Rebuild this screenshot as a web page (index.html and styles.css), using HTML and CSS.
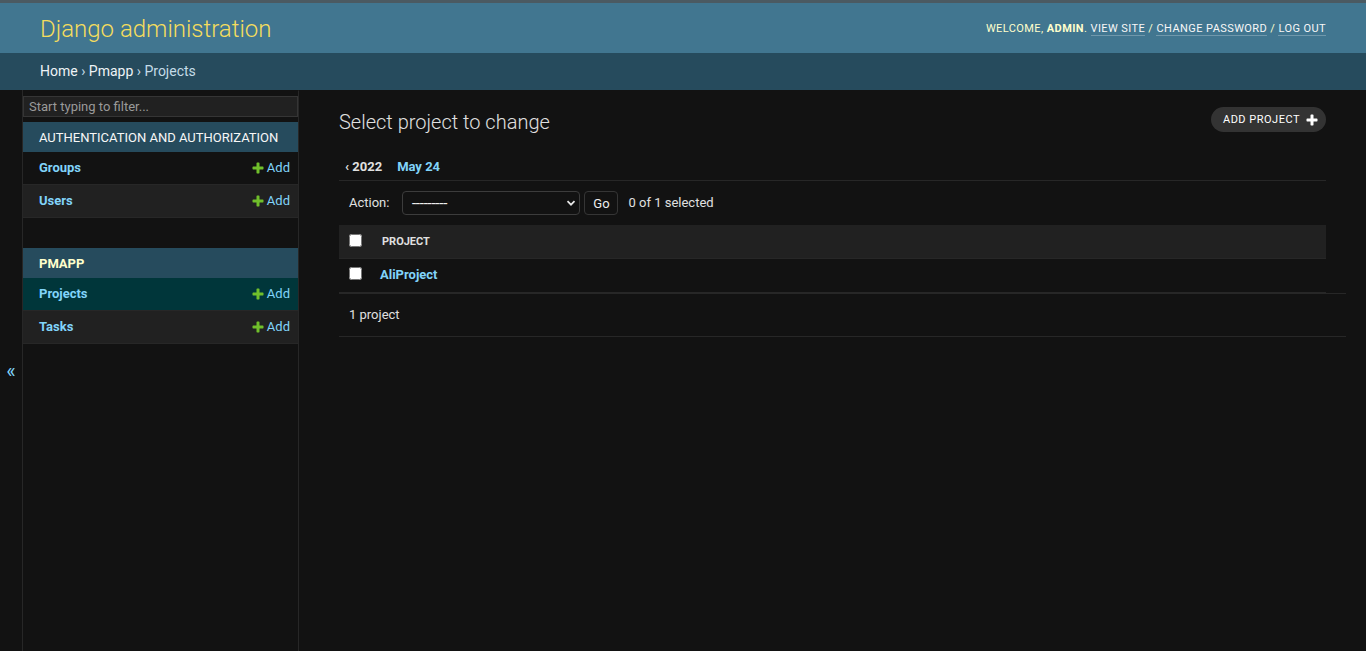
FILE: index.html
```html
<!DOCTYPE html>
<html lang="en">
<head>
<meta charset="utf-8">
<title>Select project to change | Django site admin</title>
<link rel="stylesheet" href="styles.css">
</head>
<body>
<div class="topband"></div>
<header class="header">
  <h1 class="site-name"><a href="#">Django administration</a></h1>
  <div class="user-tools">Welcome, <strong>admin</strong>. <a href="#">View site</a> / <a href="#">Change password</a> / <a href="#">Log out</a></div>
</header>
<nav class="breadcrumbs"><a href="#">Home</a>&nbsp;›&nbsp;<a href="#">Pmapp</a>&nbsp;›&nbsp;Projects</nav>
<div class="main">
  <button class="toggle-nav" type="button">«</button>
  <nav class="sidebar">
    <input class="nav-filter" type="search" placeholder="Start typing to filter...">
    <div class="app">
      <div class="app-caption"><a href="#">Authentication and Authorization</a></div>
      <div class="model-row odd">
        <a class="model-link" href="#">Groups</a>
        <a class="addlink" href="#"><svg class="plus" viewBox="0 0 1792 1792"><path fill="#70bf2b" d="M1600 796v192q0 40-28 68t-68 28h-416v416q0 40-28 68t-68 28h-192q-40 0-68-28t-28-68v-416h-416q-40 0-68-28t-28-68v-192q0-40 28-68t68-28h416v-416q0-40 28-68t68-28h192q40 0 68 28t28 68v416h416q40 0 68 28t28 68z"/></svg>Add</a>
      </div>
      <div class="model-row even">
        <a class="model-link" href="#">Users</a>
        <a class="addlink" href="#"><svg class="plus" viewBox="0 0 1792 1792"><path fill="#70bf2b" d="M1600 796v192q0 40-28 68t-68 28h-416v416q0 40-28 68t-68 28h-192q-40 0-68-28t-28-68v-416h-416q-40 0-68-28t-28-68v-192q0-40 28-68t68-28h416v-416q0-40 28-68t68-28h192q40 0 68 28t28 68v416h416q40 0 68 28t28 68z"/></svg>Add</a>
      </div>
    </div>
    <div class="app current-app">
      <div class="app-caption"><a href="#">Pmapp</a></div>
      <div class="model-row current-model">
        <a class="model-link" href="#">Projects</a>
        <a class="addlink" href="#"><svg class="plus" viewBox="0 0 1792 1792"><path fill="#70bf2b" d="M1600 796v192q0 40-28 68t-68 28h-416v416q0 40-28 68t-68 28h-192q-40 0-68-28t-28-68v-416h-416q-40 0-68-28t-28-68v-192q0-40 28-68t68-28h416v-416q0-40 28-68t68-28h192q40 0 68 28t28 68v416h416q40 0 68 28t28 68z"/></svg>Add</a>
      </div>
      <div class="model-row even">
        <a class="model-link" href="#">Tasks</a>
        <a class="addlink" href="#"><svg class="plus" viewBox="0 0 1792 1792"><path fill="#70bf2b" d="M1600 796v192q0 40-28 68t-68 28h-416v416q0 40-28 68t-68 28h-192q-40 0-68-28t-28-68v-416h-416q-40 0-68-28t-28-68v-192q0-40 28-68t68-28h416v-416q0-40 28-68t68-28h192q40 0 68 28t28 68v416h416q40 0 68 28t28 68z"/></svg>Add</a>
      </div>
    </div>
  </nav>
  <main class="content">
    <div class="title-row">
      <h1 class="page-title">Select project to change</h1>
      <a class="object-tool" href="#">Add project<svg class="tool-plus" viewBox="0 0 1792 1792"><path fill="#ffffff" d="M1600 796v192q0 40-28 68t-68 28h-416v416q0 40-28 68t-68 28h-192q-40 0-68-28t-28-68v-416h-416q-40 0-68-28t-28-68v-192q0-40 28-68t68-28h416v-416q0-40 28-68t68-28h192q40 0 68 28t28 68v416h416q40 0 68 28t28 68z"/></svg></a>
    </div>
    <ul class="toplinks">
      <li class="date-back"><a href="#">‹ 2022</a></li>
      <li><a href="#">May 24</a></li>
    </ul>
    <div class="actions">
      <label class="action-label">Action: </label>
      <span class="select-wrap">
        <select class="action-select"><option>---------</option><option>Delete selected projects</option></select>
        <svg class="chev" viewBox="0 0 10 10"><path d="M1.5 3.2 L5 6.7 L8.5 3.2" fill="none" stroke="#e8e8e8" stroke-width="1.7"/></svg>
      </span>
      <button class="go-button" type="button">Go</button>
      <span class="action-counter">0 of 1 selected</span>
    </div>
    <table class="result-list">
      <thead>
        <tr>
          <th class="check"><input type="checkbox"></th>
          <th class="col">Project</th>
        </tr>
      </thead>
      <tbody>
        <tr>
          <td class="check"><input type="checkbox"></td>
          <td class="col"><a href="#">AliProject</a></td>
        </tr>
      </tbody>
    </table>
    <p class="paginator">1 project</p>
  </main>
</div>
</body>
</html>
```
FILE: styles.css
```css
* { box-sizing: border-box; }
html, body { margin: 0; height: 100%; }
body {
  background: #121212;
  color: #eeeeee;
  font-family: Roboto, "Liberation Sans", Arial, sans-serif;
  font-size: 14px;
  display: flex;
  flex-direction: column;
}
a { text-decoration: none; color: #81d4fa; }

.topband { flex: none; height: 3px; background: #4b5a62; }

.header {
  flex: none;
  height: 50px;
  padding: 1px 40px 0;
  display: flex;
  justify-content: space-between;
  align-items: center;
  background: #417690;
  color: #ffffcc;
}
.site-name { margin: 0; font-size: 24px; font-weight: 300; line-height: normal; }
.site-name a { color: #f5dd5d; }
.user-tools {
  font-size: 11px;
  letter-spacing: 0.42px;
  text-transform: uppercase;
  font-weight: 400;
  color: #ffffcc;
}
.user-tools strong { font-weight: 700; }
.user-tools a { color: #f7f7f7; border-bottom: 1px solid rgba(255,255,255,0.25); }

.breadcrumbs {
  flex: none;
  height: 37px;
  padding: 0 40px 1px;
  display: flex;
  align-items: center;
  background: #264b5d;
  color: #c4dce8;
  font-size: 14px;
}
.breadcrumbs a { color: #eef3f6; }

.main { flex: 1 0 auto; display: flex; }

.toggle-nav {
  flex: 0 0 23px;
  width: 23px;
  border: 0;
  border-right: 1px solid #272727;
  background: #121212;
  color: #81d4fa;
  font-family: Roboto, "Liberation Sans", sans-serif;
  font-size: 20px;
  padding: 0;
  display: flex;
  align-items: center;
  justify-content: center;
}

.sidebar {
  flex: 0 0 276px;
  border-top: 1px solid transparent;
  border-right: 1px solid #272727;
}
.nav-filter {
  display: block;
  width: 100%;
  height: 21px;
  margin: 5px 0;
  padding: 2px 5px;
  border: 1px solid #353535;
  background: #212121;
  color: #eeeeee;
  font-family: Roboto, "Liberation Sans", sans-serif;
  font-size: 13px;
  outline: none;
}
.nav-filter::placeholder { color: #9a9a9a; }

.app { margin-bottom: 30px; }
.app-caption {
  height: 30px;
  padding: 0 0 0 16px;
  display: flex;
  align-items: center;
  background: #264b5d;
  font-size: 13px;
  letter-spacing: 0;
  text-transform: uppercase;
  white-space: nowrap;
  overflow: hidden;
}
.app-caption a { color: #f7f7f7; font-weight: 400; }
.current-app .app-caption a { color: #ffffcc; font-weight: 700; }

.model-row {
  height: 33px;
  padding: 0 8px 1px 16px;
  display: flex;
  justify-content: space-between;
  align-items: center;
  border-bottom: 1px solid #272727;
  font-size: 13px;
}
.model-row.odd { background: #121212; }
.model-row.even { background: #212121; }
.model-row.current-model { background: #00363a; }
.model-link { font-weight: 700; }
.addlink { display: inline-flex; align-items: center; gap: 2px; }
.plus { width: 14px; height: 14px; }

.content { flex: 1; min-width: 0; padding: 20px 40px; }

.title-row { display: flex; justify-content: space-between; align-items: flex-start; }
.page-title {
  margin: 0;
  font-size: 20px;
  font-weight: 300;
  line-height: 24px;
  color: #e0e0e0;
}
.object-tool {
  margin-top: -3px;
  height: 25px;
  padding: 0 7px 0 12px;
  display: flex;
  align-items: center;
  gap: 5px;
  border-radius: 15px;
  background: #333333;
  color: #ffffff;
  font-size: 11px;
  letter-spacing: 0.5px;
  text-transform: uppercase;
}
.tool-plus { width: 14px; height: 14px; }

.toplinks {
  list-style: none;
  margin: 25px 0 0;
  padding: 0 0 5px;
  border-bottom: 1px solid #272727;
  display: flex;
  gap: 3px;
}
.toplinks li { padding: 0 6px; font-size: 13px; font-weight: 700; line-height: 16px; }
.toplinks .date-back a { color: #e0e0e0; }

.actions {
  padding: 10px;
  display: flex;
  align-items: center;
  color: #e0e0e0;
  font-size: 13px;
  line-height: 24px;
}
.action-label { margin-right: 13px; }
.select-wrap { position: relative; display: block; }
.action-select {
  display: block;
  appearance: none;
  -webkit-appearance: none;
  width: 178px;
  height: 24px;
  margin: 0;
  padding: 0 0 0 8px;
  border: 1px solid #3c3c3c;
  border-radius: 4px;
  background: #121212;
  color: #eeeeee;
  font-family: "DejaVu Sans", Roboto, sans-serif;
  font-size: 14px;
  letter-spacing: -1.15px;
}
.chev { position: absolute; right: 4px; top: 7px; width: 10px; height: 10px; pointer-events: none; }
.go-button {
  margin-left: 4px;
  height: 24px;
  width: 34px;
  padding: 0;
  border: 1px solid #353535;
  border-radius: 4px;
  background: #121212;
  color: #eeeeee;
  font-family: Roboto, "Liberation Sans", sans-serif;
  font-size: 13px;
}
.action-counter { margin-left: 10px; }

.result-list { width: 100%; border-collapse: collapse; }
.result-list input[type=checkbox] { margin: 0; width: 13px; height: 13px; display: block; }
.result-list thead th {
  background: #212121;
  height: 33px;
  text-align: left;
  vertical-align: middle;
  color: #e0e0e0;
  font-size: 11px;
  font-weight: 700;
  text-transform: uppercase;
  line-height: 17px;
  border-bottom: 1px solid #272727;
}
.result-list thead th.check { width: 33px; padding: 0 0 2px 10px; }
.result-list thead th.col { padding: 1px 10px 0; }
.result-list tbody td {
  height: 34px;
  padding: 8px;
  line-height: 16px;
  vertical-align: top;
  border-bottom: 1px solid #272727;
  font-size: 13px;
  background: #121212;
}
.result-list tbody td.check { padding: 8px 0 8px 10px; }
.result-list tbody td.col a { font-weight: 700; }

.paginator {
  margin: 0;
  width: calc(100% + 20px);
  padding: 10px;
  line-height: 22px;
  font-size: 13px;
  color: #e0e0e0;
  border-top: 1px solid #272727;
  border-bottom: 1px solid #272727;
}
```
